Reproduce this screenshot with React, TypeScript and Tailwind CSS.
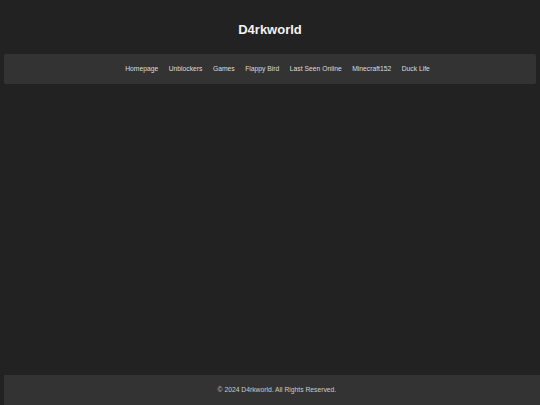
const links = ['Homepage', 'Unblockers', 'Games', 'Flappy Bird', 'Last Seen Online', 'Minecraft152', 'Duck Life'];

export default function App() {
  return (
    <div className="flex h-[405px] flex-col overflow-hidden bg-[#222222] font-['Liberation_Sans',Arial,sans-serif]">
      <header className="flex h-[54px] items-center justify-center pt-[4px]">
        <h1 className="text-[13px] font-bold leading-[15px] text-[#f2f2f2]">D4rkworld</h1>
      </header>

      <nav className="mx-[3.75px] flex h-[29.5px] items-center justify-center rounded-[2px] bg-[#333333]">
        <ul className="flex gap-[10.5px] pl-[15px] text-[6.75px] leading-[8px]">
          {links.map((link) => (
            <li key={link}>
              <a href="#" className="text-[#dddddd]">{link}</a>
            </li>
          ))}
        </ul>
      </nav>

      <main className="flex-1" />

      <footer className="ml-[3.75px] flex h-[30px] items-center justify-center bg-[#333333] pl-[10px] pb-[1px]">
        <p className="text-[6.75px] leading-[8px] text-[#cccccc]">© 2024 D4rkworld. All Rights Reserved.</p>
      </footer>
    </div>
  );
}
